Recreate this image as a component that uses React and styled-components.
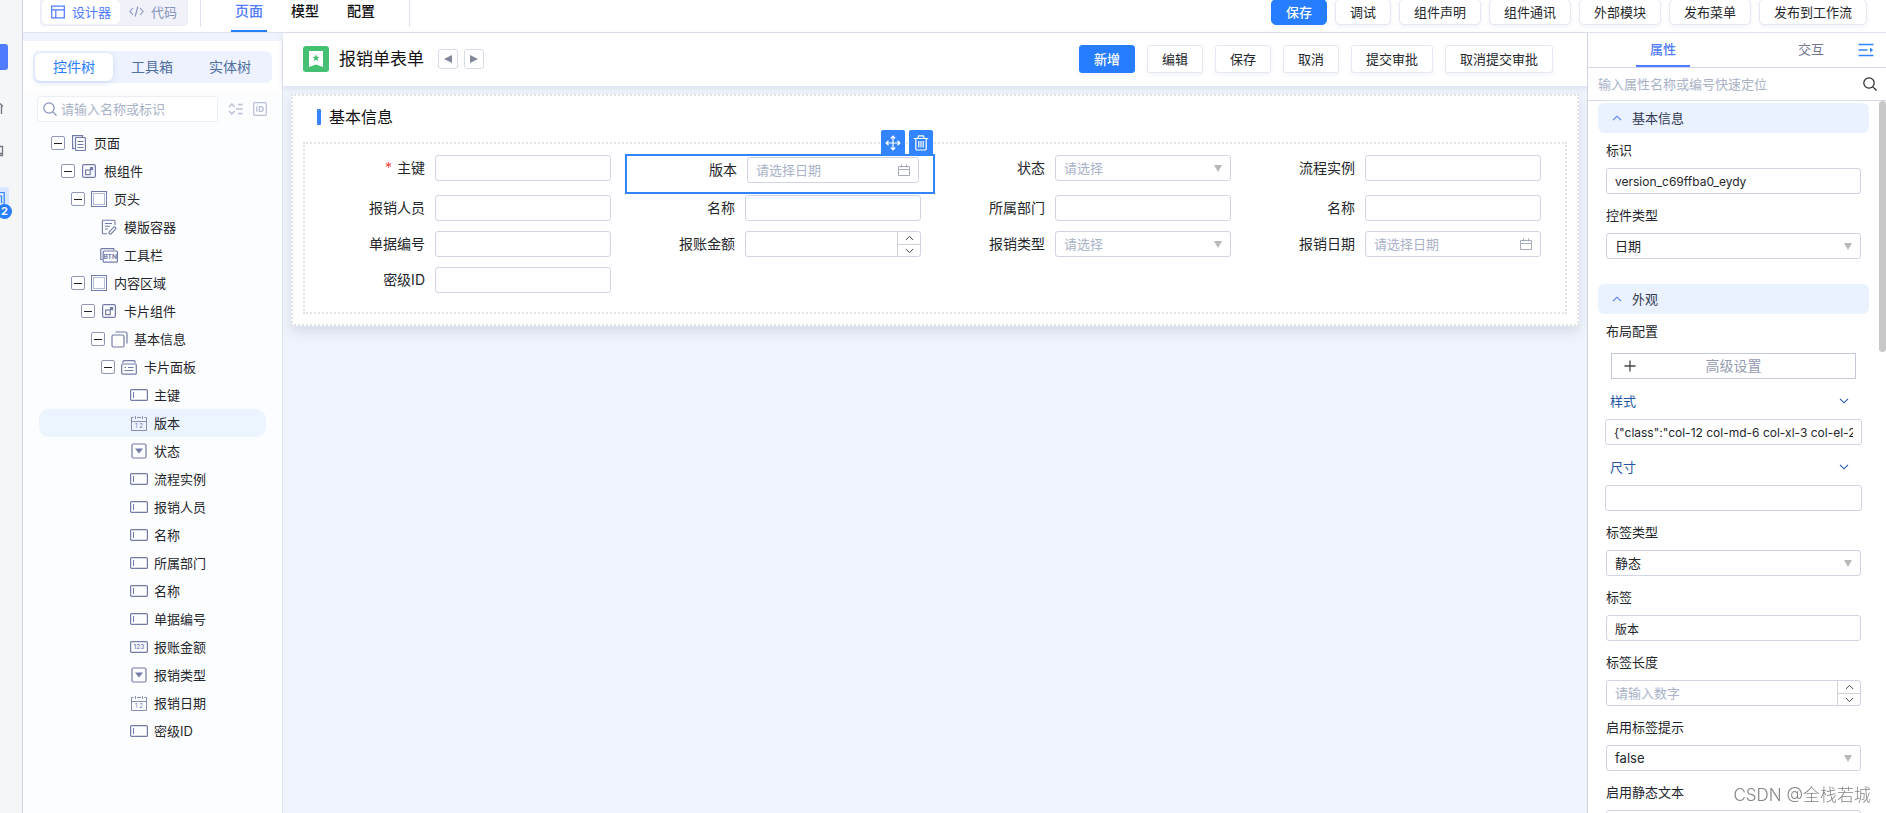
import styled, { createGlobalStyle, css } from 'styled-components';

const colors = {
  primary: '#267dff',
  indigo: '#4f7bff',
  pageBg: '#eff3fc',
  line: '#dfe3ef',
  inputBorder: '#d0d4e4',
  text: '#24262b',
  placeholder: '#a9b2c8',
  icon: '#737ba8',
};

const GlobalStyle = createGlobalStyle`
  * {
    box-sizing: border-box;
  }

  body {
    margin: 0;
    overflow: hidden;
  }

  body, button, input, select {
    font-family: Inter, "Noto Sans CJK SC", sans-serif;
    font-size: 13px;
    line-height: 20px;
    color: ${colors.text};
  }

  button, input, select {
    margin: 0;
    outline: none;
  }

  button {
    padding: 0;
    cursor: pointer;
  }

  svg {
    display: block;
    flex: none;
  }
`;

const Page = styled.div`
  display: flex;
  height: 100vh;
  overflow: hidden;
  background: ${colors.pageBg};
`;

/* ---------- left rail ---------- */

const Rail = styled.nav`
  flex: none;
  width: 23px;
  padding-top: 44px;
  background: #f5f6f8;
  border-right: 1px solid #cfd3e2;
`;

const RailBlock = styled.div`
  width: 8px;
  height: 26px;
  border-radius: 0 3px 3px 0;
  background: ${colors.indigo};
`;

const RailItem = styled.button`
  display: block;
  position: relative;
  width: 9px;
  height: 22px;
  margin-top: ${(props) => props.$gap}px;
  border: none;
  border-radius: 0 3px 3px 0;
  background: ${(props) => (props.$active ? '#d9e7fe' : 'none')};
`;

const Badge = styled.span`
  position: absolute;
  left: -3px;
  top: 17px;
  width: 15px;
  height: 15px;
  border-radius: 50%;
  background: ${colors.primary};
  color: #fff;
  font-size: 11px;
  font-weight: 700;
  line-height: 15px;
  text-align: center;
`;

/* ---------- top bar ---------- */

const Body = styled.div`
  flex: 1;
  display: flex;
  flex-direction: column;
  min-width: 0;
`;

const TopBar = styled.header`
  flex: none;
  height: 33px;
  overflow: hidden;
  background: #fff;
  border-bottom: 1px solid ${colors.line};
`;

const TopBarRow = styled.div`
  display: flex;
  align-items: center;
  height: 28px;
  margin-top: -2px;
  padding: 0 19px 0 17px;
`;

const Segment = styled.div`
  display: flex;
  height: 28px;
  padding: 2px;
  border-radius: 5px;
  background: #f1f2f9;
  box-shadow: inset 0 0 0 1px #e8ebf9;
`;

const SegmentButton = styled.button`
  display: flex;
  align-items: center;
  gap: 7px;
  padding: 0 9px;
  border: none;
  border-radius: 5px;
  background: ${(props) => (props.$active ? '#fff' : 'none')};
  color: ${(props) => (props.$active ? colors.indigo : '#8492bd')};
`;

const TopNav = styled.nav`
  display: flex;
  gap: 20px;
  height: 29px;
  margin-left: 12px;
  padding: 0 30px;
  border: solid ${colors.line};
  border-width: 0 1px;
`;

const TopLink = styled.a`
  height: 34px;
  padding: 0 4px;
  border-bottom: 2px solid ${(props) => (props.$active ? colors.primary : 'transparent')};
  color: ${(props) => (props.$active ? colors.indigo : '#111')};
  font-size: 14px;
  font-weight: 500;
  line-height: 26px;
  text-decoration: none;
`;

const Actions = styled.div`
  display: flex;
  gap: ${(props) => props.$gap}px;
  margin-left: auto;
`;

const Button = styled.button`
  height: ${(props) => (props.$large ? 28 : 26)}px;
  padding: 0 14px;
  border: 1px solid #e6e8f3;
  border-radius: ${(props) => (props.$large ? 3 : 5)}px;
  background: #fff;
  box-shadow: 0 2px 4px rgba(40, 60, 120, 0.06);
  white-space: nowrap;

  ${(props) => props.$primary && css`
    border-color: ${colors.primary};
    background: ${colors.primary};
    color: #fff;
    font-weight: 500;
  `}
`;

/* ---------- tree panel ---------- */

const Columns = styled.div`
  flex: 1;
  display: flex;
  min-height: 0;
`;

const SidePanel = styled.aside`
  flex: none;
  width: 260px;
  margin-top: 8px;
  background: #fcfdff;
  border-right: 1px solid ${colors.line};
`;

const PanelTabs = styled.div`
  padding: 10px 10px 8px;
  background: #fff;
`;

const PanelTabList = styled.div`
  display: flex;
  height: 32px;
  padding: 2px;
  border-radius: 6px;
  background: #edf2fe;
`;

const PanelTab = styled.button`
  width: 78px;
  border: none;
  border-radius: 6px;
  background: ${(props) => (props.$active ? '#fff' : 'none')};
  box-shadow: ${(props) => (props.$active ? '0 2px 6px rgba(60, 110, 220, 0.18)' : 'none')};
  color: ${(props) => (props.$active ? colors.primary : '#50709f')};
  font-size: 14px;
`;

const TreeSearch = styled.div`
  display: flex;
  align-items: center;
  gap: 10px;
  padding: 5px 15px 7px 14px;
  color: #b9bfd4;
`;

const TreeSearchBox = styled.label`
  flex: 1;
  display: flex;
  align-items: center;
  gap: 4px;
  min-width: 0;
  height: 26px;
  padding: 0 5px;
  border: 1px solid #eceef5;
  border-radius: 3px;
  background: #fff;
  color: #8390bd;
`;

const BareInput = styled.input`
  flex: 1;
  min-width: 0;
  padding: 0;
  border: none;
  background: none;

  &::placeholder {
    color: ${colors.placeholder};
    opacity: 1;
  }
`;

const IconButton = styled.button`
  display: flex;
  align-items: center;
  justify-content: center;
  border: none;
  background: none;
  color: inherit;
`;

const Tree = styled.ul`
  margin: 0;
  padding: 0 16px;
  list-style: none;
`;

const TreeRow = styled.li`
  display: flex;
  align-items: center;
  height: 28px;
  padding-left: ${(props) => 12 + props.$level * 10}px;
  border-radius: 10px;
  background: ${(props) => (props.$selected ? '#ecf5ff' : 'none')};
`;

const Toggle = styled.button`
  width: 14px;
  height: 14px;
  padding: 0 2px;
  border: 1px solid #9097b8;
  border-radius: 2px;
  background: #fff;

  &::before {
    content: '';
    display: block;
    height: 1px;
    background: #222;
  }
`;

const ToggleSpace = styled.span`
  width: 14px;
`;

const NodeIcon = styled.span`
  display: flex;
  justify-content: center;
  width: 18px;
  margin: 0 6px 0 5px;
  color: ${colors.icon};
`;

/* ---------- canvas ---------- */

const Canvas = styled.main`
  flex: 1;
  min-width: 0;
`;

const FormHeader = styled.div`
  position: relative;
  display: flex;
  align-items: center;
  height: 53px;
  padding: 0 34px 2px 20px;
  background: #fff;
  box-shadow: 0 2px 6px rgba(50, 70, 120, 0.12);
`;

const FormTitle = styled.h1`
  margin: 0 14px 0 10px;
  color: #111;
  font-size: 17px;
  font-weight: 400;
  line-height: 24px;
`;

const Pager = styled.div`
  display: flex;
  gap: 6px;
`;

const PagerButton = styled.button`
  display: flex;
  align-items: center;
  justify-content: center;
  width: 20px;
  height: 20px;
  border: 1px solid #d9dce6;
  border-radius: 3px;
  background: #fff;
  color: #82879a;
`;

const Card = styled.section`
  margin: 8px;
  padding: 0 10px 10px;
  border: 2px dotted #e3e3e3;
  background: #fff;
  box-shadow: 0 6px 10px rgba(50, 70, 110, 0.12);
`;

const CardTitle = styled.h2`
  display: flex;
  align-items: center;
  gap: 8px;
  height: 46px;
  margin: 0;
  padding: 0 14px 4px;
  color: #111;
  font-size: 16px;
  font-weight: 400;
  line-height: 24px;

  &::before {
    content: '';
    width: 4px;
    height: 16px;
    border-radius: 1px;
    background: #3b82ff;
  }
`;

const FormGrid = styled.form`
  display: grid;
  grid-template-columns: repeat(4, 1fr);
  padding: 10px;
  border: 2px dotted #e3e3e3;
`;

const Cell = styled.div`
  position: relative;
  display: grid;
  grid-template-columns: 120px 1fr;
  align-items: start;
  padding: 1px 14px 9px 0;

  ${(props) => props.$selected && css`
    border: 2px solid #3385ff;
  `}
`;

const CellLabel = styled.label`
  padding-right: 10px;
  font-size: 14px;
  line-height: 26px;
  text-align: right;
`;

const Required = styled.span`
  margin-right: 5px;
  color: #f5483b;
`;

const CellTools = styled.div`
  position: absolute;
  right: 0;
  bottom: 100%;
  display: flex;
  gap: 4px;
`;

const ToolButton = styled(IconButton)`
  width: 24px;
  height: 26px;
  background: #3385ff;
  border-radius: 2px 2px 0 0;
  color: #fff;
`;

/* ---------- form controls ---------- */

const Control = styled.div`
  position: relative;
  display: flex;
  align-items: center;
  height: 26px;
  border: 1px solid ${colors.inputBorder};
  border-radius: 3px;
  background: #fff;
  overflow: hidden;
`;

const ControlInput = styled(BareInput)`
  height: 24px;
  margin: 0 8px;
  font-size: ${(props) => props.$size || 13}px;
`;

const ControlSelect = styled.select`
  flex: 1;
  min-width: 0;
  height: 24px;
  padding: 0 24px 0 8px;
  border: none;
  background: none;
  appearance: none;
  color: ${(props) => (props.$empty ? colors.placeholder : colors.text)};
`;

const Arrow = styled.span`
  position: absolute;
  right: 8px;
  top: 9px;
  border: solid transparent;
  border-width: 7px 4px 0;
  border-top-color: #b9b9b9;
  pointer-events: none;
`;

const CalendarMark = styled.span`
  margin-right: 8px;
  color: #a5abba;
`;

const Stepper = styled.div`
  display: grid;
  grid-template-rows: 1fr 1fr;
  width: 23px;
  height: 24px;
  border-left: 1px solid #d0d2da;

  button + button {
    border-top: 1px solid #d0d2da;
  }
`;

/* ---------- property panel ---------- */

const Properties = styled.aside`
  position: relative;
  flex: none;
  width: 299px;
  overflow: hidden;
  background: #fff;
  border-left: 1px solid #cfd3e2;
`;

const PropTabs = styled.div`
  display: flex;
  height: 35px;
  padding: 0 12px 0 48px;
  border-bottom: 1px solid #d5d9e6;
`;

const PropTab = styled.button`
  width: 54px;
  padding-bottom: ${(props) => (props.$active ? 0 : 2)}px;
  margin-right: ${(props) => (props.$active ? 94 : 0)}px;
  border: none;
  border-bottom: ${(props) => (props.$active ? `2px solid ${colors.indigo}` : 'none')};
  background: none;
  color: ${(props) => (props.$active ? colors.indigo : '#73758c')};
  font-weight: ${(props) => (props.$active ? 500 : 400)};
`;

const CollapseButton = styled(IconButton)`
  margin-left: auto;
  color: #3385ff;
`;

const PropSearch = styled.label`
  display: flex;
  align-items: center;
  height: 33px;
  padding: 0 9px 0 10px;
  border-bottom: 1px solid #d5d9e6;
`;

const PropBody = styled.div`
  padding: 2px 17px 0 10px;
`;

const Group = styled.section`
  margin-bottom: 25px;
`;

const GroupHead = styled.h3`
  display: flex;
  align-items: center;
  gap: 10px;
  height: 30px;
  margin: 0;
  padding: 0 14px;
  border-radius: 6px;
  background: #eaf1ff;
  color: #323a52;
  font-size: 13px;
  font-weight: 400;
`;

const Field = styled.div`
  padding: 0 8px;
  margin-top: ${(props) => (props.$first ? 7 : 11)}px;
`;

const FieldLabel = styled.label`
  display: block;
  height: 28px;
  line-height: 20px;
`;

const WideField = styled.div`
  padding: 0 7px;
  margin-top: 11px;
`;

const FoldLabel = styled.label`
  display: flex;
  align-items: center;
  justify-content: space-between;
  height: 22px;
  margin-bottom: 7px;
  padding: 0 13px 0 5px;
  color: #2456a6;
`;

const AdvancedButton = styled.button`
  display: grid;
  grid-template-columns: 28px 1fr 28px;
  align-items: center;
  justify-items: center;
  width: calc(100% - 10px);
  height: 26px;
  margin: 4px 5px 0;
  padding: 0 4px;
  border: 1px solid #c3c8dc;
  background: #fff;
  color: #949bb0;
  font-size: 14px;
`;

const ScrollThumb = styled.div`
  position: absolute;
  right: 0;
  top: 68px;
  width: 7px;
  height: 251px;
  border-radius: 4px;
  background: #c8c8c8;
`;

const Watermark = styled.div`
  position: fixed;
  right: 15px;
  bottom: 5px;
  color: #868686;
  font-size: 17px;
  font-weight: 300;
  line-height: 26px;
  text-shadow: 1px 1px 0 #fff;
  pointer-events: none;
`;

/* ---------- icons ---------- */

function Icon({ w = 16, h = 16, sw = 1, children }) {
  return (
    <svg width={w} height={h} viewBox={`0 0 ${w} ${h}`} fill="none" stroke="currentColor" strokeWidth={sw} aria-hidden="true">
      {children}
    </svg>
  );
}

const SearchIcon = ({ size = 14 }) => (
  <svg width={size} height={size} viewBox="0 0 14 14" fill="none" stroke="currentColor" strokeWidth="1.2" aria-hidden="true">
    <circle cx="6" cy="6" r="5.2" />
    <path d="M9.8 9.8 13.5 13.5" />
  </svg>
);

const Chevron = ({ up, w = 10, color = 'currentColor' }) => (
  <svg width={w} height="6" viewBox="0 0 10 6" fill="none" stroke={color} strokeWidth="1.1" aria-hidden="true">
    <path d={up ? 'M1 5.2 5 1.2 9 5.2' : 'M1 .8 5 4.8 9 .8'} />
  </svg>
);

const CalendarIcon = () => (
  <Icon w={12} h={12}>
    <path d="M.5 2.5h11v9H.5zM.5 5.5h11M3.5 .5v3M8.5 .5v3" />
  </Icon>
);

const nodeIcons = {
  page: (
    <Icon w={14} h={16}>
      <path d="M2.5 13.5h-2v-13h10v2" strokeWidth="1.3" />
      <rect x="3.5" y="2.5" width="10" height="13" rx="1" strokeWidth="1.2" />
      <path d="M5.5 6.5h6M5.5 9.5h6M5.5 12.5h6" />
    </Icon>
  ),
  component: (
    <Icon w={14} h={14}>
      <rect x=".6" y=".6" width="12.8" height="12.8" rx="1.5" strokeWidth="1.2" />
      <rect x="3.6" y="6" width="4.6" height="4.6" strokeWidth="1.2" />
      <path d="M8 3h3.2v3.2H8z" fill="currentColor" stroke="none" />
    </Icon>
  ),
  area: (
    <Icon w={16} h={16}>
      <rect x=".5" y=".5" width="15" height="15" />
      <rect x="2.5" y="2.5" width="11" height="11" strokeDasharray="1 1" />
    </Icon>
  ),
  template: (
    <Icon sw={1.1}>
      <path d="M14 6V2.2a1 1 0 0 0-1-1H2.4a1 1 0 0 0-1 1v11.6a1 1 0 0 0 1 1h4" />
      <path d="M4 4.5h7M4 7.3h5M4 10h3" />
      <path d="M8.6 14.9a1.6 1.6 0 0 1-.2-2.2l4.2-4.4a1.3 1.3 0 0 1 1.9 0 1.3 1.3 0 0 1 0 1.9l-4.2 4.4a1.4 1.4 0 0 1-1.7.3z" />
    </Icon>
  ),
  toolbar: (
    <Icon w={18} h={15} sw={1.2}>
      <path d="M2.5 11.5H.8V1.6a1 1 0 0 1 1-1h12v1.6" />
      <rect x="3.2" y="3" width="14.2" height="11.2" rx="1" />
      <text x="10.3" y="11.2" fontSize="6.6" fontWeight="700" textAnchor="middle" fill="currentColor" stroke="none">BTN</text>
    </Icon>
  ),
  stack: (
    <Icon w={17} h={17} sw={1.2}>
      <rect x="1" y="4" width="12" height="12" rx="1.5" />
      <path d="M4.5 1h10a1.5 1.5 0 0 1 1.5 1.5v10" />
    </Icon>
  ),
  cardPanel: (
    <Icon w={16} h={15} sw={1.2}>
      <path d="M2 3V1.6a1 1 0 0 1 1-1h10a1 1 0 0 1 1 1V3" />
      <rect x=".7" y="4" width="14.6" height="10.2" rx="1" />
      <path d="M3.5 7.5H5M7 7.5h5.5M3.5 10.5h9" />
    </Icon>
  ),
  input: (
    <Icon w={18} h={12}>
      <rect x=".6" y=".6" width="16.8" height="10.8" rx="1" strokeWidth="1.2" />
      <path d="M3.5 3v6" />
    </Icon>
  ),
  date: (
    <Icon w={16} h={16}>
      <path d="M2.5 2.5h-2v13h15v-13h-2M6 2.5h4M.5 6.5h15M4.5 1v3M11.5 1v3" opacity=".85" />
      <text x="8" y="13.4" fontSize="6" textAnchor="middle" fill="currentColor" stroke="none">1 2</text>
    </Icon>
  ),
  select: (
    <Icon sw={1.2}>
      <rect x="1" y="1" width="14" height="14" rx="1.5" />
      <path d="M4 5.5h8l-4 5z" fill="currentColor" stroke="none" />
    </Icon>
  ),
  number: (
    <Icon w={18} h={12}>
      <rect x=".6" y=".6" width="16.8" height="10.8" rx="1" strokeWidth="1.2" />
      <text x="9" y="8.4" fontSize="6.6" fontWeight="500" textAnchor="middle" fill="currentColor" stroke="none">123</text>
    </Icon>
  ),
};

/* ---------- data ---------- */

const treeNodes = [
  { level: 0, icon: 'page', label: '页面', open: true },
  { level: 1, icon: 'component', label: '根组件', open: true },
  { level: 2, icon: 'area', label: '页头', open: true },
  { level: 3, icon: 'template', label: '模版容器' },
  { level: 3, icon: 'toolbar', label: '工具栏' },
  { level: 2, icon: 'area', label: '内容区域', open: true },
  { level: 3, icon: 'component', label: '卡片组件', open: true },
  { level: 4, icon: 'stack', label: '基本信息', open: true },
  { level: 5, icon: 'cardPanel', label: '卡片面板', open: true },
  { level: 6, icon: 'input', label: '主键' },
  { level: 6, icon: 'date', label: '版本', selected: true },
  { level: 6, icon: 'select', label: '状态' },
  { level: 6, icon: 'input', label: '流程实例' },
  { level: 6, icon: 'input', label: '报销人员' },
  { level: 6, icon: 'input', label: '名称' },
  { level: 6, icon: 'input', label: '所属部门' },
  { level: 6, icon: 'input', label: '名称' },
  { level: 6, icon: 'input', label: '单据编号' },
  { level: 6, icon: 'number', label: '报账金额' },
  { level: 6, icon: 'select', label: '报销类型' },
  { level: 6, icon: 'date', label: '报销日期' },
  { level: 6, icon: 'input', label: '密级ID' },
];

const formFields = [
  { label: '主键', required: true },
  { label: '版本', type: 'date', placeholder: '请选择日期', selected: true },
  { label: '状态', type: 'select', placeholder: '请选择' },
  { label: '流程实例' },
  { label: '报销人员' },
  { label: '名称' },
  { label: '所属部门' },
  { label: '名称' },
  { label: '单据编号' },
  { label: '报账金额', type: 'number' },
  { label: '报销类型', type: 'select', placeholder: '请选择' },
  { label: '报销日期', type: 'date', placeholder: '请选择日期' },
  { label: '密级ID' },
];

const labelFields = [
  { label: '标签类型', type: 'select', value: '静态' },
  { label: '标签', value: '版本', size: 12 },
  { label: '标签长度', type: 'number', placeholder: '请输入数字' },
  { label: '启用标签提示', type: 'select', value: 'false' },
  { label: '启用静态文本', type: 'text' },
];

const topActions = ['调试', '组件声明', '组件通讯', '外部模块', '发布菜单', '发布到工作流'];
const formActions = ['编辑', '保存', '取消', '提交审批', '取消提交审批'];

/* ---------- components ---------- */

function FieldControl({ id, type = 'text', value, placeholder, size }) {
  if (type === 'select') {
    return (
      <Control>
        <ControlSelect id={id} $empty={!value}>
          <option>{value || placeholder}</option>
        </ControlSelect>
        <Arrow />
      </Control>
    );
  }

  return (
    <Control>
      <ControlInput id={id} type="text" defaultValue={value} placeholder={placeholder} $size={size} />
      {type === 'date' && (
        <CalendarMark>
          <CalendarIcon />
        </CalendarMark>
      )}
      {type === 'number' && (
        <Stepper>
          <IconButton type="button" aria-label="增加"><Chevron up w={9} color="#444" /></IconButton>
          <IconButton type="button" aria-label="减少"><Chevron w={9} color="#444" /></IconButton>
        </Stepper>
      )}
    </Control>
  );
}

function LeftRail() {
  return (
    <Rail>
      <RailBlock />
      <RailItem $gap={27} aria-label="首页">
        <Icon w={4} h={16} sw={1.3}>
          <path d="M0 3.5 3 6.5M1.5 6v8" stroke="#70757f" />
        </Icon>
      </RailItem>
      <RailItem $gap={21} aria-label="屏幕">
        <Icon w={4} h={16} sw={1.3}>
          <path d="M0 3.5h2.5v9H0M0 10.5h2" stroke="#70757f" />
        </Icon>
      </RailItem>
      <RailItem $gap={25} $active aria-label="消息">
        <Icon w={6} h={16} sw={1.2}>
          <path d="M0 2.5h4.2v12M0 6h1.5v7" stroke="#3385ff" />
        </Icon>
        <Badge>2</Badge>
      </RailItem>
    </Rail>
  );
}

function TopHeader() {
  return (
    <TopBar>
      <TopBarRow>
        <Segment>
          <SegmentButton $active>
            <Icon w={14} h={14} sw={1.2}>
              <path d="M.7 1.2h12.6v11.6H.7zM.7 4.8h12.6M4.8 4.8v8" />
            </Icon>
            设计器
          </SegmentButton>
          <SegmentButton>
            <Icon w={15} h={12} sw={1.1}>
              <path d="M4 2 .9 5.5 4 9M11 2l3.1 3.5L11 9M8.8.5 6.2 10.5" />
            </Icon>
            代码
          </SegmentButton>
        </Segment>
        <TopNav>
          <TopLink href="#page" $active>页面</TopLink>
          <TopLink href="#model">模型</TopLink>
          <TopLink href="#config">配置</TopLink>
        </TopNav>
        <Actions $gap={8}>
          <Button $primary>保存</Button>
          {topActions.map((label) => (
            <Button key={label}>{label}</Button>
          ))}
        </Actions>
      </TopBarRow>
    </TopBar>
  );
}

function TreePanel() {
  return (
    <SidePanel>
      <PanelTabs>
        <PanelTabList>
          <PanelTab $active>控件树</PanelTab>
          <PanelTab>工具箱</PanelTab>
          <PanelTab>实体树</PanelTab>
        </PanelTabList>
      </PanelTabs>
      <TreeSearch>
        <TreeSearchBox>
          <SearchIcon />
          <BareInput type="text" placeholder="请输入名称或标识" aria-label="请输入名称或标识" />
        </TreeSearchBox>
        <IconButton aria-label="展开">
          <Icon w={15} h={14} sw={1.3}>
            <path d="M1 5 3.8 2 6.6 5M1 9l2.8 3 2.8-3M10 2.5h4.5M8 7h6.5M10 11.5h4.5" />
          </Icon>
        </IconButton>
        <IconButton aria-label="标识">
          <Icon w={14} h={14} sw={1.2}>
            <rect x=".7" y=".7" width="12.6" height="12.6" rx="1" />
            <path d="M3.8 4.2v5.6M6.3 4.7h1.5c1.6 0 2.5.9 2.5 2.3s-.9 2.3-2.5 2.3H6.3z" />
          </Icon>
        </IconButton>
      </TreeSearch>
      <Tree>
        {treeNodes.map((node, index) => (
          <TreeRow key={index} $level={node.level} $selected={node.selected}>
            {node.open ? <Toggle aria-label="收起" /> : <ToggleSpace />}
            <NodeIcon>{nodeIcons[node.icon]}</NodeIcon>
            <span>{node.label}</span>
          </TreeRow>
        ))}
      </Tree>
    </SidePanel>
  );
}

function FormCanvas() {
  return (
    <Canvas>
      <FormHeader>
        <svg width="26" height="26" viewBox="0 0 26 26" aria-hidden="true">
          <rect width="26" height="26" rx="3" fill="#45c072" />
          <path d="M6 5h14v16l-7-2.6L6 21z" fill="#fff" />
          <path d="m13 8.6 1 2.2 2.4.2-1.8 1.6.5 2.4-2.1-1.3-2.1 1.3.5-2.4-1.8-1.6 2.4-.2z" fill="#45c072" />
        </svg>
        <FormTitle>报销单表单</FormTitle>
        <Pager>
          <PagerButton aria-label="上一个">
            <svg width="8" height="8" viewBox="0 0 8 8"><path d="M8 0v8L0 4z" fill="currentColor" /></svg>
          </PagerButton>
          <PagerButton aria-label="下一个">
            <svg width="8" height="8" viewBox="0 0 8 8"><path d="M0 0v8l8-4z" fill="currentColor" /></svg>
          </PagerButton>
        </Pager>
        <Actions $gap={12}>
          <Button $large $primary>新增</Button>
          {formActions.map((label) => (
            <Button key={label} $large>{label}</Button>
          ))}
        </Actions>
      </FormHeader>
      <Card>
        <CardTitle>基本信息</CardTitle>
        <FormGrid>
          {formFields.map((field, index) => (
            <Cell key={index} $selected={field.selected}>
              <CellLabel htmlFor={`form-${index}`}>
                {field.required && <Required>*</Required>}
                {field.label}
              </CellLabel>
              <FieldControl id={`form-${index}`} type={field.type} placeholder={field.placeholder} />
              {field.selected && (
                <CellTools>
                  <ToolButton type="button" aria-label="移动">
                    <Icon sw={1.2}>
                      <path d="M8 1.5v13M1.5 8h13M5.8 3.5 8 1.2l2.2 2.3M5.8 12.5 8 14.8l2.2-2.3M3.5 5.8 1.2 8l2.3 2.2M12.5 5.8 14.8 8l-2.3 2.2" />
                    </Icon>
                  </ToolButton>
                  <ToolButton type="button" aria-label="删除">
                    <Icon sw={1.2}>
                      <path d="M.8 3.5h14.4M4.8 3.2l.8-2.4h4.8l.8 2.4M2.8 3.5v10.3a1.2 1.2 0 0 0 1.2 1.2h8a1.2 1.2 0 0 0 1.2-1.2V3.5M5.8 6v6.5M8 6v6.5M10.2 6v6.5" />
                    </Icon>
                  </ToolButton>
                </CellTools>
              )}
            </Cell>
          ))}
        </FormGrid>
      </Card>
    </Canvas>
  );
}

function PropertyPanel() {
  return (
    <Properties>
      <PropTabs>
        <PropTab $active>属性</PropTab>
        <PropTab>交互</PropTab>
        <CollapseButton aria-label="收起面板">
          <Icon w={16} h={14} sw={1.3}>
            <path d="M.5 1.5h15M.5 7h9M.5 12.5h15" />
            <path d="M12 4.5v5L15.2 7z" fill="currentColor" stroke="none" />
          </Icon>
        </CollapseButton>
      </PropTabs>
      <PropSearch>
        <BareInput type="text" placeholder="输入属性名称或编号快速定位" aria-label="输入属性名称或编号快速定位" />
        <SearchIcon />
      </PropSearch>
      <PropBody>
        <Group>
          <GroupHead><Chevron up color={colors.indigo} />基本信息</GroupHead>
          <Field $first>
            <FieldLabel htmlFor="prop-id">标识</FieldLabel>
            <FieldControl id="prop-id" value="version_c69ffba0_eydy" size={12} />
          </Field>
          <Field>
            <FieldLabel htmlFor="prop-type">控件类型</FieldLabel>
            <FieldControl id="prop-type" type="select" value="日期" />
          </Field>
        </Group>
        <Group>
          <GroupHead><Chevron up color={colors.indigo} />外观</GroupHead>
          <Field $first>
            <FieldLabel htmlFor="prop-layout">布局配置</FieldLabel>
            <AdvancedButton id="prop-layout">
              <Icon w={12} h={12} sw={1.3}>
                <path d="M6 .5v11M.5 6h11" stroke="#444" />
              </Icon>
              高级设置
            </AdvancedButton>
          </Field>
          <WideField>
            <FoldLabel htmlFor="prop-style">样式<Chevron /></FoldLabel>
            <FieldControl id="prop-style" value={'{"class":"col-12 col-md-6 col-xl-3 col-el-2"}'} size={12} />
          </WideField>
          <WideField>
            <FoldLabel htmlFor="prop-size">尺寸<Chevron /></FoldLabel>
            <FieldControl id="prop-size" />
          </WideField>
          {labelFields.map((field, index) => (
            <Field key={field.label}>
              <FieldLabel htmlFor={`prop-label-${index}`}>{field.label}</FieldLabel>
              <FieldControl
                id={`prop-label-${index}`}
                type={field.type}
                value={field.value}
                placeholder={field.placeholder}
                size={field.size}
              />
            </Field>
          ))}
        </Group>
      </PropBody>
      <ScrollThumb />
    </Properties>
  );
}

function App() {
  return (
    <Page>
      <GlobalStyle />
      <LeftRail />
      <Body>
        <TopHeader />
        <Columns>
          <TreePanel />
          <FormCanvas />
          <PropertyPanel />
        </Columns>
      </Body>
      <Watermark>CSDN @全栈若城</Watermark>
    </Page>
  );
}

export default App;
